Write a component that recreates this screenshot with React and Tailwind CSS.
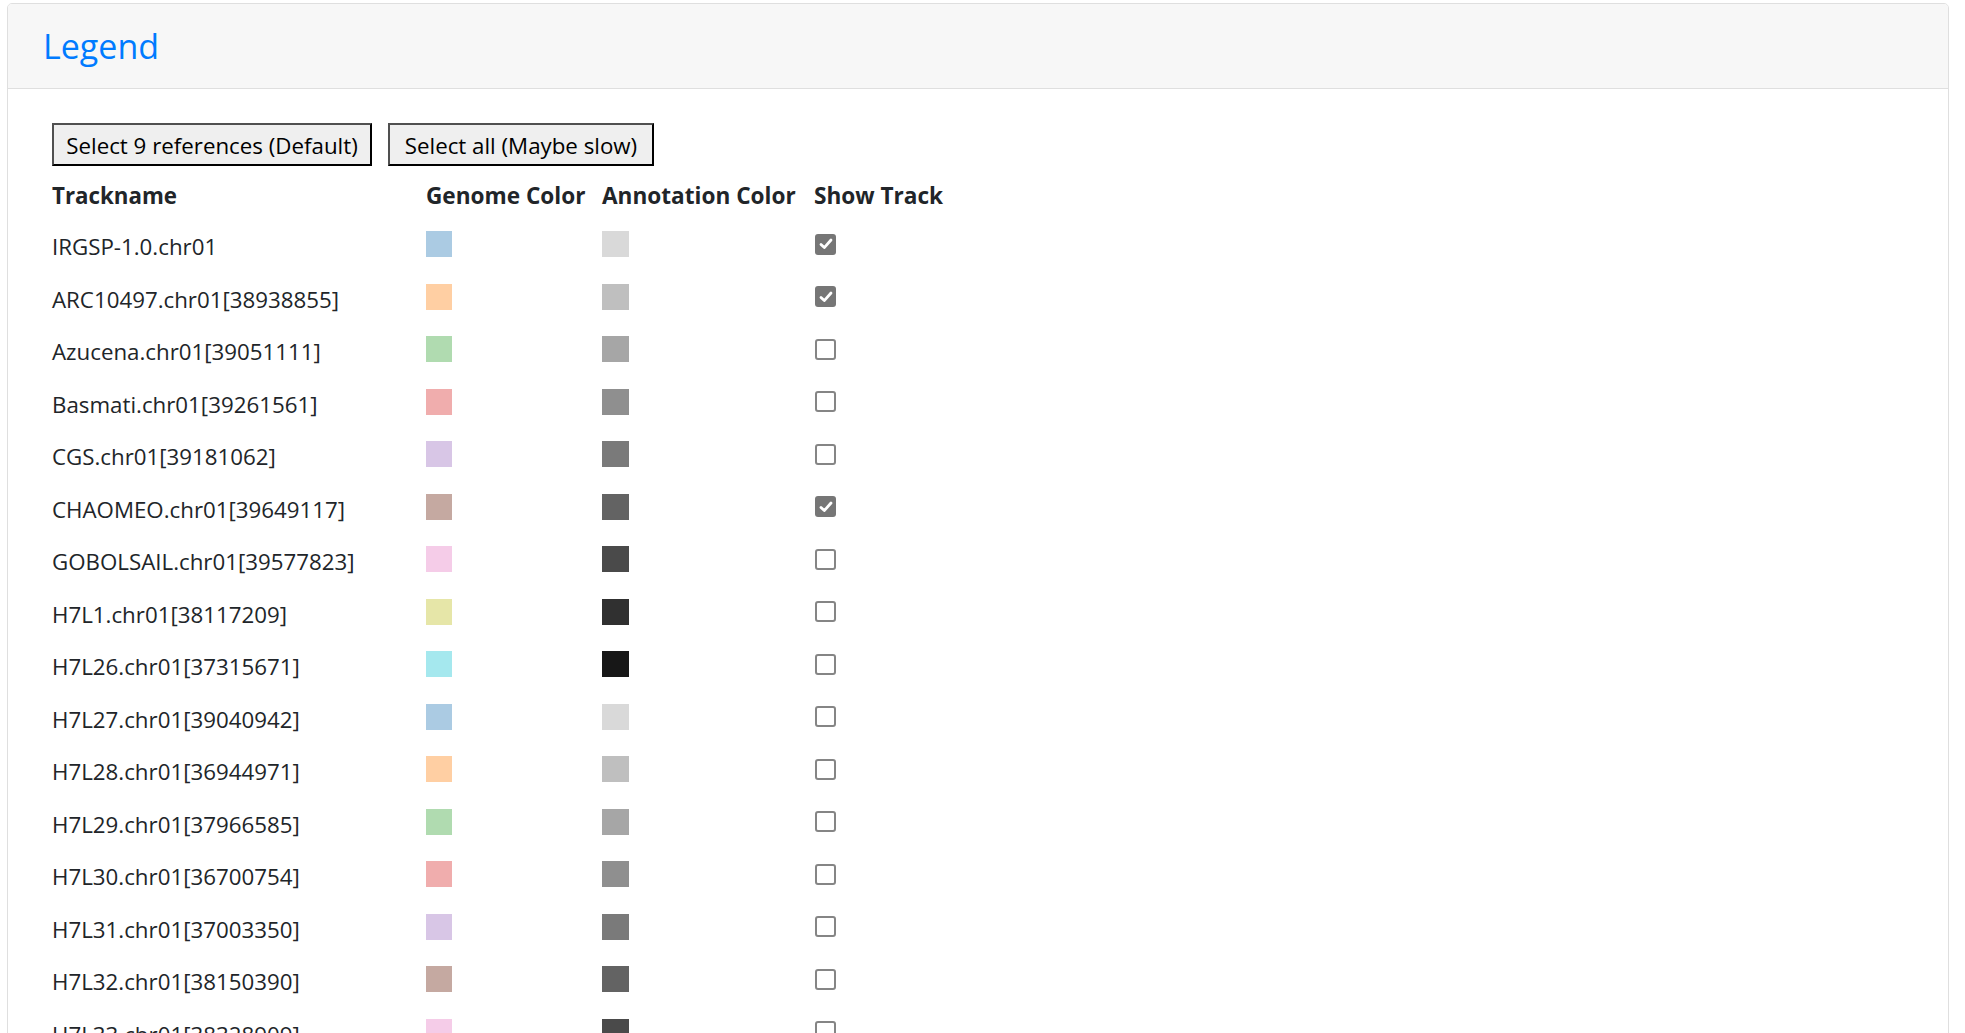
import React from "react"

const genomeColors = ["#abcbe3", "#ffcfa3", "#b0dbb0", "#f0adad", "#d8c6e6", "#c5a9a1", "#f5cce8", "#e6e6a8", "#a5e8ee"]
const annotColors = ["#d9d9d9", "#bfbfbf", "#a6a6a6", "#8f8f8f", "#7a7a7a", "#636363", "#4a4a4a", "#303030", "#171717"]

const tracks = [
    { name: "IRGSP-1.0.chr01", show: true },
    { name: "ARC10497.chr01[38938855]", show: true },
    { name: "Azucena.chr01[39051111]", show: false },
    { name: "Basmati.chr01[39261561]", show: false },
    { name: "CGS.chr01[39181062]", show: false },
    { name: "CHAOMEO.chr01[39649117]", show: true },
    { name: "GOBOLSAIL.chr01[39577823]", show: false },
    { name: "H7L1.chr01[38117209]", show: false },
    { name: "H7L26.chr01[37315671]", show: false },
    { name: "H7L27.chr01[39040942]", show: false },
    { name: "H7L28.chr01[36944971]", show: false },
    { name: "H7L29.chr01[37966585]", show: false },
    { name: "H7L30.chr01[36700754]", show: false },
    { name: "H7L31.chr01[37003350]", show: false },
    { name: "H7L32.chr01[38150390]", show: false },
    { name: "H7L33.chr01[38328909]", show: false },
]

function Check({ checked }) {
    if (checked) {
        return (
            <span className="flex w-[21px] h-[21px] items-center justify-center rounded-[3px] bg-[#767676]">
                <svg width="16" height="16" viewBox="0 0 16 16">
                    <path d="M3 8.4 L6.3 11.6 L13 4" fill="none" stroke="#fff" strokeWidth="2.8" strokeLinecap="round" strokeLinejoin="round" />
                </svg>
            </span>
        )
    }
    return <span className="block w-[21px] h-[21px] rounded-[3px] border-2 border-[#858585] bg-white"></span>
}

export default function App() {
    return (
        <div className="min-h-screen bg-white pt-[3px] text-[#212529]" style={{ fontFamily: '"Open Sans", "Noto Sans", sans-serif' }}>
            <div className="ml-[7px] w-[1942px] border border-[#dfdfdf] rounded-[5px] overflow-hidden">
                <div className="h-[85px] bg-[#f7f7f7] border-b border-[#dfdfdf] flex items-center pl-[35px]">
                    <h3 className="text-[34px] font-medium leading-tight text-[#007bff]">Legend</h3>
                </div>
                <div className="pt-[34px] pl-[44px] pb-10 text-[22.3px]">
                    <div className="flex gap-[16px]">
                        <button className="h-[43px] w-[320px] flex items-center justify-center pt-[3px] border-2 border-[#505050] border-b-black border-r-black bg-[#efefef] text-[22.3px] leading-none text-black">
                            Select 9 references (Default)
                        </button>
                        <button className="h-[43px] w-[266px] flex items-center justify-center pt-[3px] border-2 border-[#505050] border-b-black border-r-black bg-[#efefef] text-[22.3px] leading-none text-black">
                            Select all (Maybe slow)
                        </button>
                    </div>
                    <div className="mt-[8px] grid grid-cols-[374px_176px_212px_200px]">
                        <div className="h-[44px] flex items-center font-bold text-[22.3px]">Trackname</div>
                        <div className="h-[44px] flex items-center font-bold text-[22.6px]">Genome Color</div>
                        <div className="h-[44px] flex items-center font-bold text-[22.6px]">Annotation Color</div>
                        <div className="h-[44px] flex items-center font-bold text-[22.6px]">Show Track</div>
                        {tracks.map((t, i) => (
                            <React.Fragment key={t.name}>
                                <div className="h-[52.5px] flex items-center pt-[5px]">{t.name}</div>
                                <div className="h-[52.5px] flex items-center">
                                    <span className="block w-[26px] h-[26px]" style={{ backgroundColor: genomeColors[i % 9] }}></span>
                                </div>
                                <div className="h-[52.5px] flex items-center">
                                    <span className="block w-[27px] h-[26px]" style={{ backgroundColor: annotColors[i % 9] }}></span>
                                </div>
                                <div className="h-[52.5px] flex items-center pl-[1px]">
                                    <Check checked={t.show} />
                                </div>
                            </React.Fragment>
                        ))}
                    </div>
                </div>
            </div>
        </div>
    )
}
